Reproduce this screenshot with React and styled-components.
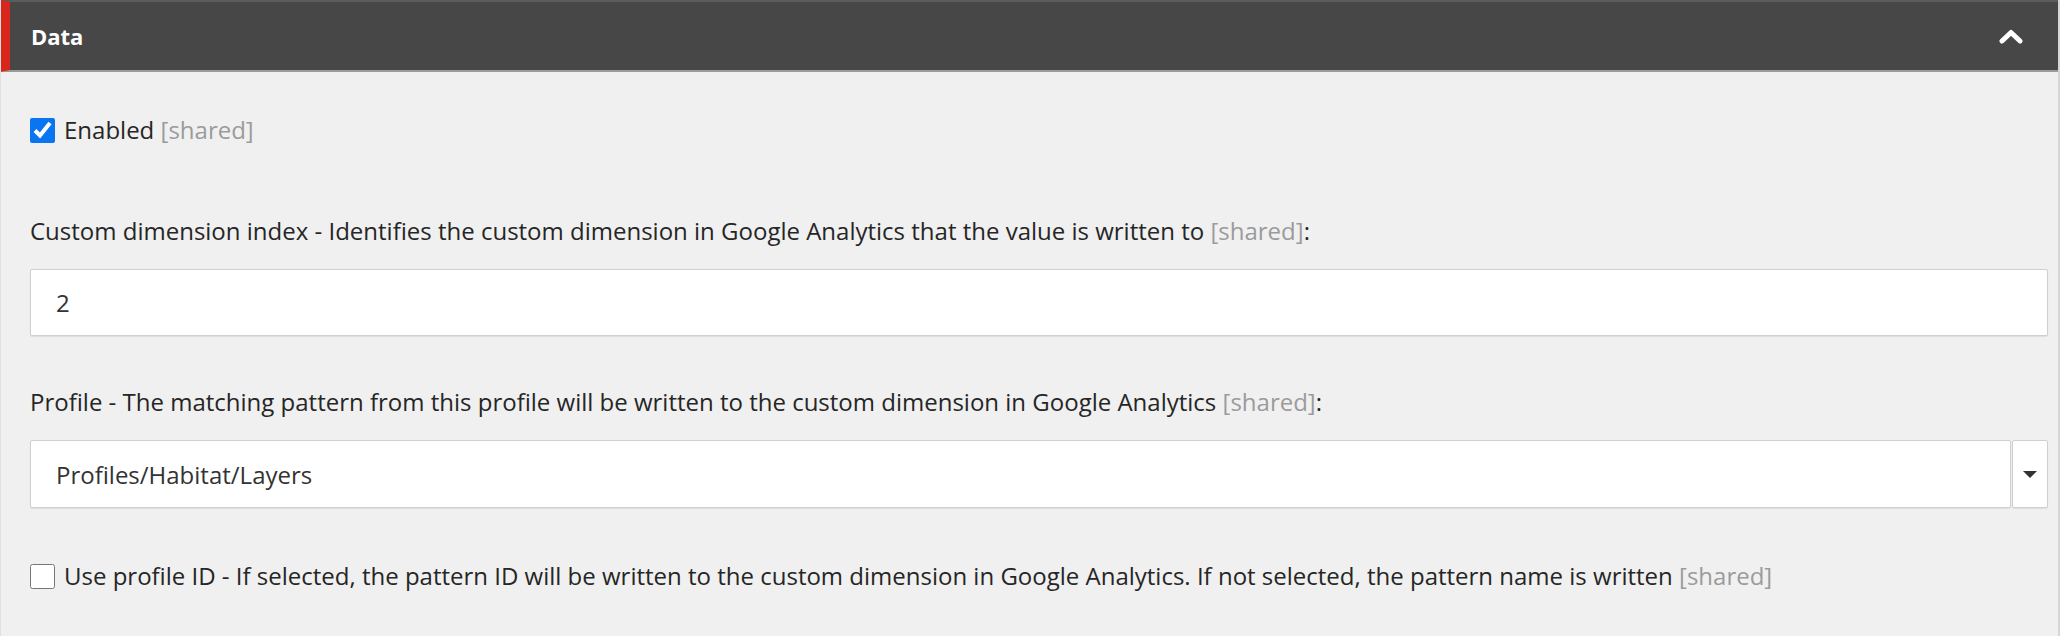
import React from "react"
import styled, { createGlobalStyle } from "styled-components"

const GlobalStyle = createGlobalStyle`
  html, body {
    margin: 0;
    padding: 0;
    background: #f0f0f0;
  }
  body {
    font-family: "Open Sans", "Liberation Sans", sans-serif;
    color: #262626;
  }
`

const Panel = styled.section`
  width: 2060px;
  height: 636px;
  box-sizing: border-box;
  border-right: 2px solid #d6d6d6;
  border-left: 1px solid #e0e0e0;
  background: #f0f0f0;
  overflow: hidden;
`

const Header = styled.header`
  height: 72px;
  box-sizing: border-box;
  display: flex;
  align-items: center;
  justify-content: space-between;
  background: #474747;
  border-top: 2px solid #5c5c5c;
  border-bottom: 2px solid #9a9a9a;
  border-left: 10px solid #d8261c;
  padding: 0 35px 0 21px;
  margin-left: -1px;
`

const Title = styled.h2`
  margin: 0;
  font-size: 22px;
  font-weight: 700;
  color: #ffffff;
`

const Toggle = styled.button`
  border: 0;
  background: none;
  padding: 0;
  display: flex;
  cursor: pointer;
`

const Body = styled.div`
  padding: 45px 10px 0 29px;
  display: flex;
  flex-direction: column;
`

const CheckRow = styled.label`
  display: flex;
  align-items: center;
  gap: 9px;
  font-size: 24px;
  line-height: 26px;
  margin-bottom: ${p => p.$gap || 0}px;
`

const Check = styled.input`
  width: 25px;
  height: 25px;
  margin: 0;
  flex: none;
  accent-color: #0a75f0;
`

const Shared = styled.span`
  color: #9b9b9b;
`

const Field = styled.div`
  display: flex;
  flex-direction: column;
  margin-bottom: ${p => p.$gap || 0}px;
`

const Label = styled.div`
  font-size: 24px;
  line-height: 28px;
  margin-bottom: 24px;
`

const TextBox = styled.input`
  height: 67px;
  box-sizing: border-box;
  width: 100%;
  border: 1px solid #cfcfcf;
  border-radius: 2px;
  box-shadow: 0 1px 1px rgba(0, 0, 0, 0.08);
  background: #ffffff;
  padding: 0 25px;
  font-family: inherit;
  font-size: 24px;
  color: #333;
  outline: none;
`

const SelectWrap = styled.div`
  display: flex;
  gap: 1px;
  height: 68px;
`

const SelectValue = styled.div`
  flex: 1;
  display: flex;
  align-items: center;
  box-sizing: border-box;
  border: 1px solid #cfcfcf;
  border-radius: 2px;
  box-shadow: 0 1px 1px rgba(0, 0, 0, 0.08);
  background: #ffffff;
  padding: 0 25px;
  font-size: 24px;
  color: #333;
`

const SelectButton = styled.div`
  width: 36px;
  box-sizing: border-box;
  display: flex;
  align-items: center;
  justify-content: center;
  border: 1px solid #cfcfcf;
  border-radius: 2px;
  box-shadow: 0 1px 1px rgba(0, 0, 0, 0.08);
  background: #ffffff;
`

export default function App() {
  return (
    <>
      <GlobalStyle />
      <Panel>
        <Header>
          <Title>Data</Title>
          <Toggle aria-label="Collapse">
            <svg width="24" height="16" viewBox="0 0 24 16">
              <polyline points="3,13 12,4.5 21,13" fill="none" stroke="#fff" strokeWidth="5" strokeLinecap="round" strokeLinejoin="round" />
            </svg>
          </Toggle>
        </Header>
        <Body>
          <CheckRow $gap={74}>
            <Check type="checkbox" defaultChecked />
            <span>Enabled <Shared>[shared]</Shared></span>
          </CheckRow>

          <Field $gap={52}>
            <Label>Custom dimension index - Identifies the custom dimension in Google Analytics that the value is written to <Shared>[shared]</Shared>:</Label>
            <TextBox defaultValue="2" />
          </Field>

          <Field $gap={55}>
            <Label>Profile - The matching pattern from this profile will be written to the custom dimension in Google Analytics <Shared>[shared]</Shared>:</Label>
            <SelectWrap>
              <SelectValue>Profiles/Habitat/Layers</SelectValue>
              <SelectButton>
                <svg width="16" height="9" viewBox="0 0 16 9">
                  <polygon points="1,1 15,1 8,8" fill="#333" />
                </svg>
              </SelectButton>
            </SelectWrap>
          </Field>

          <CheckRow>
            <Check type="checkbox" />
            <span>Use profile ID - If selected, the pattern ID will be written to the custom dimension in Google Analytics. If not selected, the pattern name is written <Shared>[shared]</Shared></span>
          </CheckRow>
        </Body>
      </Panel>
    </>
  )
}
